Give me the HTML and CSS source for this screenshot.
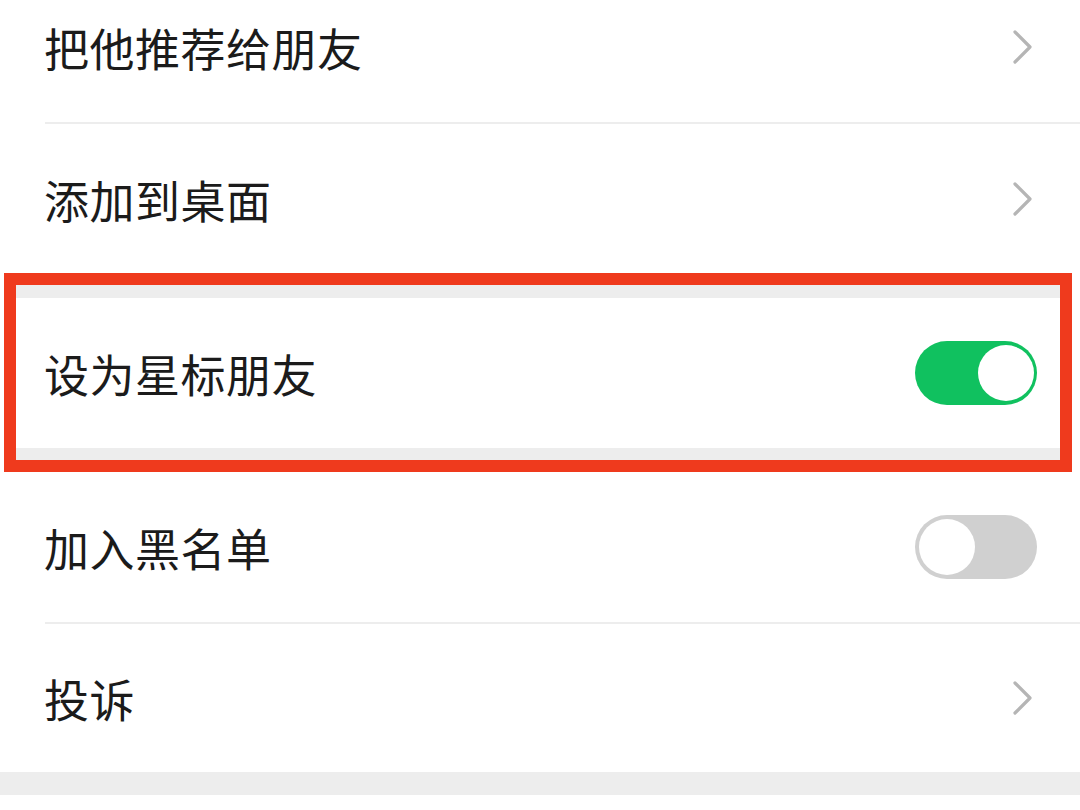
FILE: index.html
```html
<!DOCTYPE html>
<html lang="zh-CN">
<head>
    <meta charset="UTF-8">
    <meta name="viewport" content="width=device-width, initial-scale=1.0">
    <title>资料设置</title>
    <link rel="stylesheet" href="styles.css">
</head>
<body>
    <div id="list">
        <div class="row">
            <span class="label">把他推荐给朋友</span>
            <svg class="arrow" width="20" height="34" viewBox="0 0 20 34"><path d="M2 2 L17 17 L2 32" fill="none" stroke="#b5b5b5" stroke-width="3.2" stroke-linejoin="round" stroke-linecap="round"/></svg>
        </div>
        <div class="divider"></div>
        <div class="row">
            <span class="label">添加到桌面</span>
            <svg class="arrow" width="20" height="34" viewBox="0 0 20 34"><path d="M2 2 L17 17 L2 32" fill="none" stroke="#b5b5b5" stroke-width="3.2" stroke-linejoin="round" stroke-linecap="round"/></svg>
        </div>

        <!-- red frame marks the starred setting -->
        <div class="highlight">
            <div class="band"></div>
            <div class="row">
                <span class="label">设为星标朋友</span>
                <span class="switch on"><span class="knob"></span></span>
            </div>
            <div class="band"></div>
        </div>

        <div class="row">
            <span class="label">加入黑名单</span>
            <span class="switch"><span class="knob"></span></span>
        </div>
        <div class="divider"></div>
        <div class="row short">
            <span class="label">投诉</span>
            <svg class="arrow" width="20" height="34" viewBox="0 0 20 34"><path d="M2 2 L17 17 L2 32" fill="none" stroke="#b5b5b5" stroke-width="3.2" stroke-linejoin="round" stroke-linecap="round"/></svg>
        </div>
        <div class="band bottom"></div>
    </div>
</body>
</html>
```

FILE: styles.css
```css
body {
    margin: 0;
    background-color: #fff;
    font-family: "Noto Sans CJK SC", "Noto Sans", sans-serif;
    color: #1b1b1b;
    overflow: hidden;
}
#list {
    margin-top: -28px;
}
.row {
    height: 150px;
    display: flex;
    align-items: center;
    justify-content: space-between;
    padding: 0 43px 0 44px;
    background-color: #fff;
}
.row.short {
    height: 148px;
}
.label {
    font-size: 45px;
    line-height: 1;
    letter-spacing: 0.5px;
}
.arrow {
    margin-right: 4px;
}
.divider {
    height: 2px;
    margin-left: 45px;
    background-color: #ededed;
}
.band {
    height: 13px;
    background-color: #ededed;
}
.band.bottom {
    height: 23px;
}
.highlight {
    margin: -1px 8px 0 4px;
    border: 12px solid #ef3a1d;
}
.highlight .band:last-child {
    height: 12px;
}
.highlight .row {
    padding: 0 23px 0 28px;
}
.switch {
    width: 122px;
    height: 64px;
    border-radius: 32px;
    background-color: #d0d0d0;
    display: flex;
    align-items: center;
    padding: 0 4px;
    box-sizing: border-box;
}
.switch.on {
    background-color: #10c15f;
    justify-content: flex-end;
    padding: 0 3px;
}
.knob {
    width: 56px;
    height: 56px;
    border-radius: 50%;
    background-color: #fff;
}
```
